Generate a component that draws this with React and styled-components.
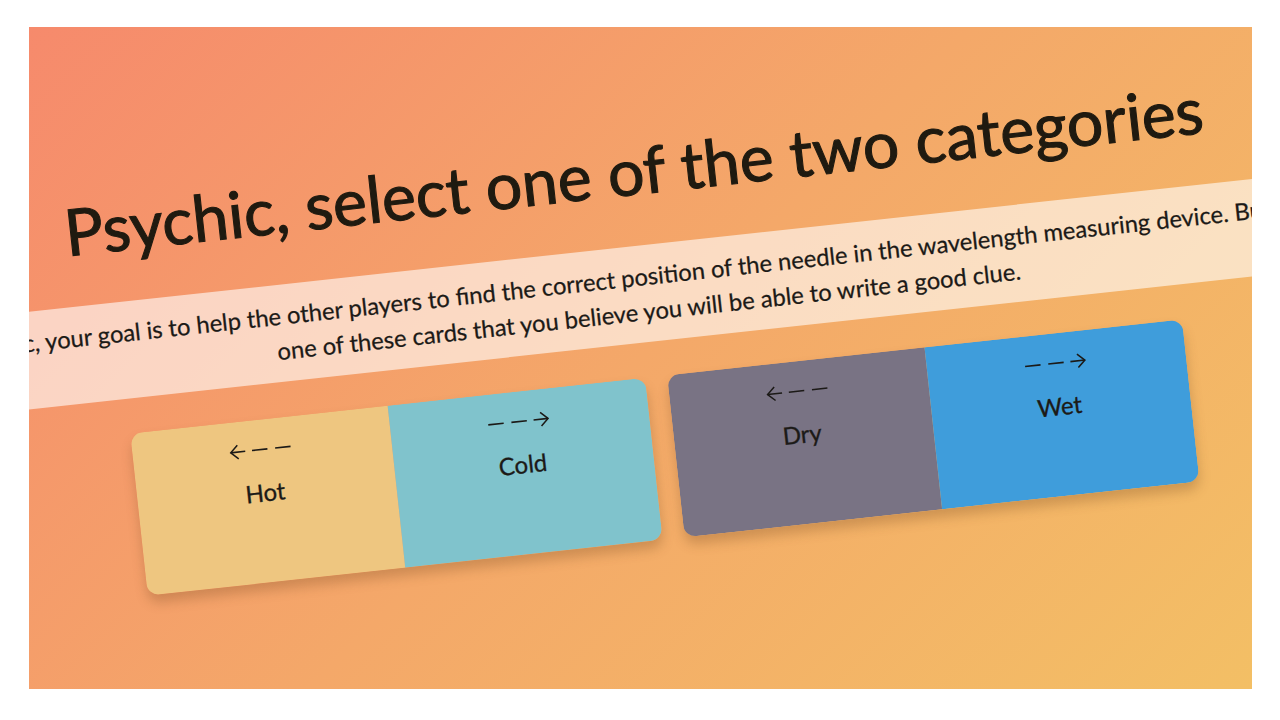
import React from "react";
import styled, { createGlobalStyle } from "styled-components";

const Global = createGlobalStyle`
  html, body { margin: 0; padding: 0; background: #fff; }
  body { font-family: Lato, "Open Sans", sans-serif; color: #1c1a17; }
`;

const Page = styled.div`
  width: 1280px;
  height: 720px;
  box-sizing: border-box;
  padding: 27px 28px 31px 29px;
  overflow: hidden;
`;

const Frame = styled.main`
  height: 662px;
  overflow: hidden;
  display: flex;
  justify-content: center;
  background: linear-gradient(135deg, #f68a6c 0%, #f4a869 50%, #f3bf65 100%);
`;

const Tilted = styled.div`
  flex: none;
  width: 1800px;
  height: 662px;
  box-sizing: border-box;
  padding: 105px 0 0 26px;
  transform: rotate(-6.2deg);
  display: flex;
  flex-direction: column;
  align-items: center;
`;

const Title = styled.h1`
  margin: 0;
  height: 114px;
  font-size: 64.4px;
  line-height: 77px;
  font-weight: 400;
  -webkit-text-stroke: 1.1px #1f1a10;
  text-align: center;
  white-space: nowrap;
  color: #1f1a10;
`;

const Banner = styled.p`
  align-self: stretch;
  margin: 0 0 35px -26px;
  padding: 14px 0 12px 26px;
  height: 97px;
  box-sizing: border-box;
  background: rgba(255, 255, 255, 0.6);
  font-size: 23.75px;
  line-height: 35px;
  -webkit-text-stroke: 0.25px #1c1a17;
  text-align: center;
  white-space: nowrap;
`;

const LeadLine = styled.span`
  padding-right: 16px;
`;

const Cards = styled.div`
  display: flex;
  gap: 22px;
  margin-left: -1px;
`;

const Card = styled.section`
  display: flex;
  width: 518px;
  height: 163px;
  border-radius: 12px;
  overflow: hidden;
  box-shadow: 0 8px 12px rgba(110, 70, 30, 0.28);
`;

const Side = styled.div`
  flex: 1;
  display: flex;
  flex-direction: column;
  align-items: center;
  padding: 22px 2px 0 0;
  background: ${(p) => p.$color};
`;

const Arrow = styled.svg`
  width: 64px;
  height: 16px;
  flex: none;
  display: block;
  color: #1c1a17;
`;

const Label = styled.span`
  margin-top: 20px;
  font-size: 24px;
  line-height: 30px;
  -webkit-text-stroke: 0.3px #1c1a17;
`;

const ArrowGlyph = ({ dir }) => (
  <Arrow viewBox="0 0 66 16" fill="none" stroke="currentColor" strokeWidth="1.6">
    {dir === "left" ? (
      <>
        <path d="M9.500 1 2 8l7.500 7" />
        <path d="M2 8h15M24 8h16M48 8h16" />
      </>
    ) : (
      <>
        <path d="M56.500 1 64 8l-7.500 7" />
        <path d="M2 8h16M26 8h16M49 8h15" />
      </>
    )}
  </Arrow>
);

const data = [
  [
    { text: "Hot", color: "#eec680", dir: "left" },
    { text: "Cold", color: "#80c3cc", dir: "right" },
  ],
  [
    { text: "Dry", color: "#797384", dir: "left" },
    { text: "Wet", color: "#3f9ddb", dir: "right" },
  ],
];

export default function App() {
  return (
    <Page>
      <Global />
      <Frame>
        <Tilted>
          <Title>Psychic, select one of the two categories</Title>
          <Banner>
            <LeadLine>
              As the Psychic, your goal is to help the other players to find the correct position of the needle in the
              wavelength measuring device. But first, select
            </LeadLine>
            <br />
            one of these cards that you believe you will be able to write a good clue.
          </Banner>
          <Cards>
            {data.map((pair, i) => (
              <Card key={i}>
                {pair.map((s) => (
                  <Side key={s.text} $color={s.color}>
                    <ArrowGlyph dir={s.dir} />
                    <Label>{s.text}</Label>
                  </Side>
                ))}
              </Card>
            ))}
          </Cards>
        </Tilted>
      </Frame>
    </Page>
  );
}
